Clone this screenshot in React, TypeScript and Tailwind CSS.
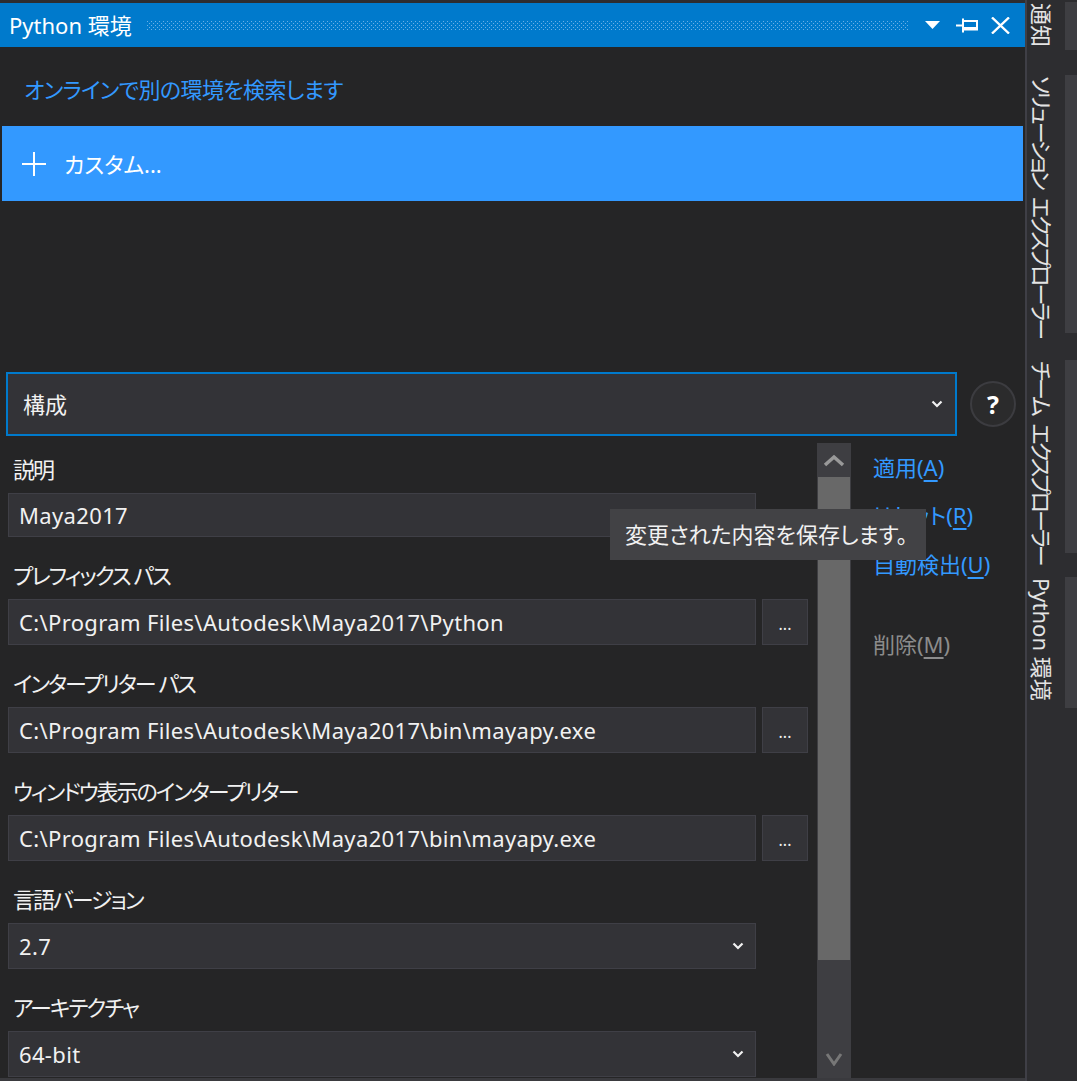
import React from "react";

const FONT = "font-['Noto_Sans','Noto_Sans_CJK_JP',sans-serif] [font-feature-settings:'palt']";

function Chevron({ className = "" }: { className?: string }) {
  return (
    <svg width="12" height="8" viewBox="0 0 12 8" className={className}>
      <path d="M1.5 1.5 L6 6 L10.5 1.5" fill="none" stroke="#f1f1f1" strokeWidth="2.2" />
    </svg>
  );
}

function Field({
  label,
  value,
  browse,
  select,
  first,
}: {
  label: string;
  value: string;
  browse?: boolean;
  select?: boolean;
  first?: boolean;
}) {
  return (
    <div className={first ? "mt-[12px]" : "mt-[24px]"}>
      <div className="h-[28px] whitespace-nowrap pl-[13px] leading-[28px] tracking-[-2px] text-[#f1f1f1]">
        {label}
      </div>
      <div className="mt-[10px] flex pl-[8px]">
        <div
          className={`flex w-[748px] items-center justify-between border border-[#3f3f46] bg-[#333337] pl-[10px] pr-[11px] text-[#f1f1f1] ${
            first ? "h-[44px]" : "h-[46px]"
          }`}
        >
          <span className="whitespace-nowrap tracking-[0.35px]">{value}</span>
          {select && <Chevron />}
        </div>
        {browse && (
          <div className="ml-[6px] flex h-[46px] w-[46px] items-end justify-center border border-[#3f3f46] bg-[#333337] pb-[12px] text-[16px] leading-[16px] text-[#f1f1f1]">
            ...
          </div>
        )}
      </div>
    </div>
  );
}

const tabs = [
  { text: "通知", h: "h-[48px]", mt: "mt-[2px]", tr: "tracking-[0px]" },
  { text: "ソリューション エクスプローラー", h: "h-[258px]", mt: "mt-[25px]", tr: "tracking-[-3px] [word-spacing:7px]" },
  { text: "チーム エクスプローラー", h: "h-[193px]", mt: "mt-[27px]", tr: "tracking-[-3px] [word-spacing:7px]" },
  { text: "Python 環境", h: "h-[131px]", mt: "mt-[24px]", tr: "tracking-[0px]" },
];

export default function App() {
  return (
    <div className={`relative flex h-[1081px] w-[1077px] overflow-hidden bg-[#252526] text-[22px] ${FONT}`}>
      {/* main tool window */}
      <div className="flex w-[1025px] flex-col">
        <div className="h-[3px] bg-[#2d2d30]" />
        <div className="flex h-[44px] items-center bg-[#007acc] pl-[9px] pr-[15px] text-white">
          <span className="whitespace-nowrap leading-[28px]">Python 環境</span>
          <svg className="ml-[15px] h-[9px] flex-1" preserveAspectRatio="none">
            <defs>
              <pattern id="grip" width="4" height="4" patternUnits="userSpaceOnUse">
                <rect x="0" y="0" width="1" height="1" fill="#6bb0e6" />
                <rect x="2" y="2" width="1" height="1" fill="#6bb0e6" />
              </pattern>
            </defs>
            <rect width="100%" height="100%" fill="url(#grip)" />
          </svg>
          <svg className="ml-[17px]" width="15" height="9" viewBox="0 0 15 9">
            <path d="M0 0 H15 L7.5 8 Z" fill="#fff" />
          </svg>
          <svg className="ml-[16px]" width="22" height="15" viewBox="0 0 22 15">
            <path d="M0 7.5 H7 M7 0.5 V14.5" stroke="#fff" strokeWidth="2" fill="none" />
            <path d="M7 3 H21 V11.5 H7" stroke="#fff" strokeWidth="2" fill="none" />
            <path d="M7 10.5 H21" stroke="#fff" strokeWidth="3" />
          </svg>
          <svg className="ml-[13px]" width="19" height="17" viewBox="0 0 19 17">
            <path d="M1 0.5 L18 16.5 M18 0.5 L1 16.5" stroke="#fff" strokeWidth="2.4" fill="none" />
          </svg>
        </div>

        <div className="flex h-[79px] items-center pl-[24px] pt-[5px] leading-[28px] tracking-[-0.6px] text-[#3399ff]">
          オンラインで別の環境を検索します
        </div>

        <div className="mx-[2px] flex h-[75px] items-center bg-[#3399ff] pl-[20px] text-white">
          <svg width="24" height="24" viewBox="0 0 24 24">
            <path d="M12 0 V24 M0 12 H24" stroke="#fff" strokeWidth="2" />
          </svg>
          <span className="ml-[18px] leading-[28px]">カスタム...</span>
        </div>

        <div className="h-[171px]" />

        <div className="flex items-center pl-[6px]">
          <div className="flex h-[64px] w-[951px] items-center justify-between border-2 border-[#007acc] bg-[#333337] pl-[15px] pr-[12px] text-[#f1f1f1]">
            <span>構成</span>
            <Chevron />
          </div>
          <div className="ml-[13px] flex h-[46px] w-[46px] items-center justify-center rounded-full border-2 border-[#3c3c40] bg-[#2b2b2c] text-[25px] font-bold leading-none text-white">
            ?
          </div>
        </div>

        <div className="mt-[7px] flex min-h-0 flex-1">
          <div className="w-[817px]">
            <Field first label="説明" value="Maya2017" />
            <Field browse label="プレフィックス パス" value="C:\Program Files\Autodesk\Maya2017\Python" />
            <Field browse label="インタープリター パス" value="C:\Program Files\Autodesk\Maya2017\bin\mayapy.exe" />
            <Field browse label="ウィンドウ表示のインタープリター" value="C:\Program Files\Autodesk\Maya2017\bin\mayapy.exe" />
            <Field select label="言語バージョン" value="2.7" />
            <Field select label="アーキテクチャ" value="64-bit" />
          </div>

          <div className="flex w-[34px] flex-col bg-[#3e3e42]">
            <div className="flex h-[34px] items-center justify-center">
              <svg width="22" height="13" viewBox="0 0 22 13">
                <path d="M2 11 L11 3 L20 11" stroke="#999" strokeWidth="3.5" fill="none" />
              </svg>
            </div>
            <div className="mx-[1px] h-[483px] bg-[#686868]" />
            <div className="flex flex-1 items-end justify-center pb-[12px]">
              <svg width="18" height="14" viewBox="0 0 18 14">
                <path d="M2 2 L9 12 L16 2" stroke="#777" strokeWidth="3" fill="none" />
              </svg>
            </div>
          </div>

          <div className="flex flex-1 flex-col whitespace-nowrap pl-[22px] leading-[28px]">
            <div className="mt-[10px] text-[#3399ff]">
              適用(<span className="underline underline-offset-4">A</span>)
            </div>
            <div className="mt-[20px] text-[#3399ff]">
              リセット(<span className="underline underline-offset-4">R</span>)
            </div>
            <div className="mt-[21px] text-[#3399ff]">
              自動検出(<span className="underline underline-offset-4">U</span>)
            </div>
            <div className="mt-[52px] text-[#8c8c8c]">
              削除(<span className="underline underline-offset-4">M</span>)
            </div>
          </div>
        </div>
        <div className="h-[3px] bg-[#3a3a3e]" />
      </div>

      {/* side tab strip */}
      <div className="w-[2px] bg-[#3f3f46]" />
      <div className="flex flex-1 flex-col bg-[#2d2d30]">
        {tabs.map((t) => (
          <div key={t.text} className={`flex ${t.h} ${t.mt}`}>
            <div className="w-[38px] pl-[3px] pt-[1px]">
              <span
                className={`whitespace-nowrap leading-[24px] text-[#e4e4e4] [text-orientation:sideways] [writing-mode:vertical-rl] ${t.tr}`}
              >
                {t.text}
              </span>
            </div>
            <div className="w-[12px] bg-[#3e3e42]" />
          </div>
        ))}
      </div>

      {/* tooltip */}
      <div className="absolute left-[610px] top-[509px] flex h-[51px] w-[316px] items-center whitespace-nowrap bg-[#424245] pl-[15px] text-[#f1f1f1]">
        変更された内容を保存します。
      </div>
    </div>
  );
}
